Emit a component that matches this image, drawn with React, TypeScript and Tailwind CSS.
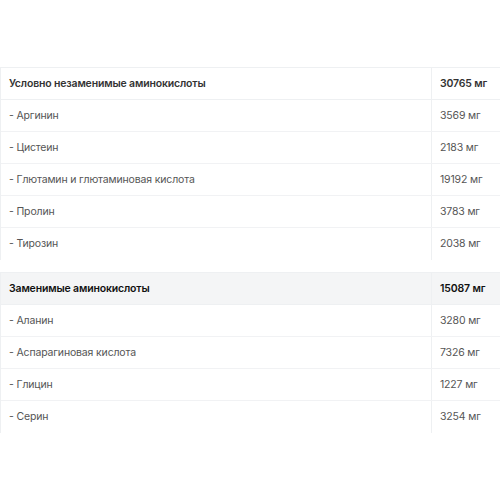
import React from "react";

type Row = { name: string; value: string };

const groups: { title: string; total: string; shaded: boolean; rows: Row[] }[] = [
  {
    title: "Условно незаменимые аминокислоты",
    total: "30765 мг",
    shaded: false,
    rows: [
      { name: "- Аргинин", value: "3569 мг" },
      { name: "- Цистеин", value: "2183 мг" },
      { name: "- Глютамин и глютаминовая кислота", value: "19192 мг" },
      { name: "- Пролин", value: "3783 мг" },
      { name: "- Тирозин", value: "2038 мг" },
    ],
  },
  {
    title: "Заменимые аминокислоты",
    total: "15087 мг",
    shaded: true,
    rows: [
      { name: "- Аланин", value: "3280 мг" },
      { name: "- Аспарагиновая кислота", value: "7326 мг" },
      { name: "- Глицин", value: "1227 мг" },
      { name: "- Серин", value: "3254 мг" },
    ],
  },
];

export default function App() {
  return (
    <div className="h-[500px] w-[500px] overflow-hidden bg-white pt-[67px] font-['Inter',sans-serif] text-[10.5px] tracking-[-0.015em]">
      <div className="flex flex-col gap-3">
        {groups.map((g) => (
          <div key={g.title} className="border-l border-t border-[#eef0f2]">
            <div className={`flex h-8 items-center border-b border-[#eef0f2] ${g.shaded ? "bg-[#f4f5f6] text-[#111]" : "text-[#333]"}`}>
              <div className="w-[430px] pl-2 font-semibold">{g.title}</div>
              <div className="flex h-full flex-1 items-center border-l border-[#eef0f2] pl-2 font-semibold">{g.total}</div>
            </div>
            {g.rows.map((r, i) => (
              <div key={r.name} className={`flex h-8 items-center text-[#555] ${i < g.rows.length - 1 ? "border-b border-[#f1f2f4]" : ""}`}>
                <div className="w-[430px] pl-2">{r.name}</div>
                <div className="flex h-full flex-1 items-center border-l border-[#eef0f2] pl-2">{r.value}</div>
              </div>
            ))}
          </div>
        ))}
      </div>
    </div>
  );
}
